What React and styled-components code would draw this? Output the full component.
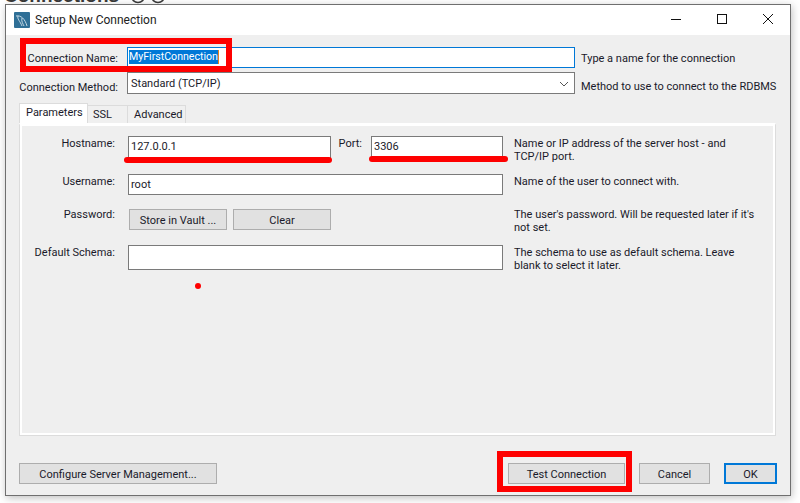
import React from 'react';
import styled, { createGlobalStyle } from 'styled-components';

const GlobalStyle = createGlobalStyle`
  html, body {
    margin: 0;
    padding: 0;
    background: #fff;
  }
`;

const Page = styled.div`
  width: 800px;
  height: 503px;
  position: relative;
  overflow: hidden;
  background: #fff;
  font-family: Roboto, "Noto Sans", sans-serif;
  font-size: 11px;
  color: #1a1a2a;
`;

const Behind = styled.div`
  height: 4px;
  padding-left: 4px;
  display: flex;
  align-items: flex-end;
  overflow: hidden;
`;

const BehindTitle = styled.div`
  font-family: "Liberation Sans", sans-serif;
  font-size: 19px;
  font-weight: 700;
  line-height: 17px;
  color: #3a3a3a;
  flex: none;
  width: 126px;
`;

const BehindIcon = styled.svg`
  width: 16px;
  height: 16px;
  margin-right: 4px;
  flex: none;
`;

const Window = styled.div`
  box-sizing: border-box;
  width: 786px;
  height: 492px;
  margin-left: 5px;
  border: 1px solid #6f6f6f;
  background: #efefef;
  box-shadow: 1px 2px 8px rgba(0, 0, 0, 0.25);
  display: flex;
  flex-direction: column;
  position: relative;
`;

const TitleBar = styled.div`
  height: 30px;
  flex: none;
  background: #fff;
  display: flex;
  align-items: center;
  padding-left: 8px;
  font-size: 12px;
  color: #222;
`;

const AppIcon = styled.svg`
  width: 16px;
  height: 16px;
  margin-right: 5px;
  flex: none;
`;

const TitleText = styled.div`
  flex: 1;
`;

const Caption = styled.svg`
  width: 46px;
  height: 30px;
  flex: none;
`;

const Body = styled.div`
  flex: 1;
  display: flex;
  flex-direction: column;
  padding: 12px 13px 11px 13px;
`;

const TopRow = styled.div`
  display: flex;
  align-items: center;
  height: ${p => p.$h}px;
  margin-bottom: ${p => p.$mb}px;
`;

const TopLabel = styled.div`
  width: 108px;
  text-align: right;
  padding: ${p => p.$drop}px 9px 0 0;
  box-sizing: border-box;
  flex: none;
  white-space: nowrap;
`;

const NameInput = styled.div`
  box-sizing: border-box;
  width: 448px;
  height: 100%;
  border: 1px solid #0078d7;
  background: #fff;
  display: flex;
  align-items: center;
  padding: 0 0 2px 1px;
`;

const Selected = styled.span`
  background: #0078d7;
  color: #fff;
  font-size: 10.6px;
  line-height: 14px;
  border-right: 1px solid #e8801a;
`;

const Select = styled.div`
  box-sizing: border-box;
  width: 448px;
  height: 100%;
  border: 1px solid #7a7a7a;
  background: #fff;
  display: flex;
  align-items: center;
  justify-content: space-between;
  padding: 0 5px 0 3px;
`;

const Chevron = styled.svg`
  width: 10px;
  height: 6px;
  margin-top: 2px;
`;

const TopHelp = styled.div`
  margin-left: 6px;
  padding-top: ${p => p.$drop}px;
  white-space: nowrap;
`;

const Tabs = styled.div`
  display: flex;
  align-items: flex-end;
  height: 20px;
`;

const Tab = styled.div`
  box-sizing: border-box;
  height: ${p => (p.$active ? 20 : 18)}px;
  width: ${p => p.$w}px;
  border: 1px solid #dcdcdc;
  border-bottom: none;
  margin-left: ${p => (p.$active ? 0 : -1)}px;
  background: ${p => (p.$active ? '#fff' : '#f0f0f0')};
  display: flex;
  align-items: center;
  padding: 0 0 ${p => (p.$active ? 2 : 0)}px ${p => p.$pl}px;
`;

const Panel = styled.div`
  box-sizing: border-box;
  flex: 1;
  width: 757px;
  border: 1px solid #dcdcdc;
  border-top: 2px solid #fff;
  outline: 2px solid #fff;
  outline-offset: -3px;
  padding-top: 11px;
  display: grid;
  grid-template-columns: 108px 203px 40px 132px 1fr;
  grid-template-rows: 24px 21px 22px 25px;
  row-gap: 14px;
  align-content: start;
`;

const FieldLabel = styled.div`
  text-align: right;
  line-height: ${p => (p.$high ? 12 : 16)}px;
  padding-right: 13px;
`;

const PortLabel = styled.div`
  text-align: right;
  padding-right: 9px;
  line-height: 16px;
`;

const Field = styled.div`
  box-sizing: border-box;
  grid-column: ${p => p.$span || 'auto'};
  border: 1px solid #7a7a7a;
  background: #fff;
  padding: 0 2px;
  line-height: 20px;
`;

const Help = styled.div`
  grid-column: 5;
  padding-left: 11px;
  width: 246px;
  line-height: 13px;
  margin-top: ${p => (p.$high ? -1 : 1)}px;
`;

const PasswordButtons = styled.div`
  grid-column: 2 / 5;
  display: flex;
  gap: 6px;
  padding-left: 1px;
`;

const Button = styled.div`
  box-sizing: border-box;
  width: ${p => p.$w}px;
  height: 21px;
  flex: none;
  margin-left: ${p => p.$ml || 0}px;
  padding-top: 1px;
  background: #e1e1e1;
  border: ${p => (p.$primary ? '2px solid #0078d7' : '1px solid #adadad')};
  display: flex;
  align-items: center;
  justify-content: center;
`;

const Footer = styled.div`
  display: flex;
  align-items: center;
  margin-top: 27px;
`;

const FooterGap = styled.div`
  flex: 1;
`;

const Box = styled.div`
  position: absolute;
  left: ${p => p.$x}px;
  top: ${p => p.$y}px;
  width: ${p => p.$w}px;
  height: ${p => p.$h}px;
  box-sizing: border-box;
  border: 6px solid #fe0000;
`;

const Stroke = styled.div`
  position: absolute;
  left: ${p => p.$x}px;
  top: ${p => p.$y}px;
  width: ${p => p.$w}px;
  height: 6px;
  border-radius: 3px;
  background: #fe0000;
`;

const Dot = styled.div`
  position: absolute;
  left: 195px;
  top: 283px;
  width: 6px;
  height: 6px;
  border-radius: 50%;
  background: #fe0000;
`;

export default function App() {
  return (
    <Page>
      <GlobalStyle />
      <Behind>
        <BehindTitle>Connections</BehindTitle>
        <BehindIcon viewBox="0 0 16 16">
          <circle cx="8" cy="8" r="6.5" fill="none" stroke="#3a3a3a" strokeWidth="1.5" />
          <path d="M8 4v8" stroke="#3a3a3a" strokeWidth="1.5" />
        </BehindIcon>
        <BehindIcon viewBox="0 0 16 16">
          <circle cx="8" cy="8" r="6.5" fill="none" stroke="#3a3a3a" strokeWidth="1.5" />
          <path d="M8 4v8" stroke="#3a3a3a" strokeWidth="1.5" />
        </BehindIcon>
      </Behind>
      <Window>
        <TitleBar>
          <AppIcon viewBox="0 0 16 16">
            <rect width="16" height="16" rx="1" fill="#2f6f96" />
            <path d="M2 4c5-1 9 3 11 10M4 4c-1 3 2 5 4 10M8 6c-1 3 1 6 2 8" stroke="#c4d8e4" strokeWidth="1" fill="none" />
          </AppIcon>
          <TitleText>Setup New Connection</TitleText>
          <Caption viewBox="0 0 46 30">
            <path d="M19 14.5h10" stroke="#111" strokeWidth="1" />
          </Caption>
          <Caption viewBox="0 0 46 30">
            <rect x="19.5" y="9.5" width="9" height="9" fill="none" stroke="#111" />
          </Caption>
          <Caption viewBox="0 0 46 30">
            <path d="M19 9l10 10M29 9l-10 10" stroke="#111" strokeWidth="1" />
          </Caption>
        </TitleBar>
        <Body>
          <TopRow $h={21} $mb={4}>
            <TopLabel $drop={2}>Connection Name:</TopLabel>
            <NameInput><Selected>MyFirstConnection</Selected></NameInput>
            <TopHelp $drop={2}>Type a name for the connection</TopHelp>
          </TopRow>
          <TopRow $h={22} $mb={9}>
            <TopLabel $drop={8}>Connection Method:</TopLabel>
            <Select>
              Standard (TCP/IP)
              <Chevron viewBox="0 0 10 6">
                <path d="M1 1l4 4 4-4" stroke="#555" fill="none" />
              </Chevron>
            </Select>
            <TopHelp $drop={7}>Method to use to connect to the RDBMS</TopHelp>
          </TopRow>
          <Tabs>
            <Tab $active $w={69} $pl={6}>Parameters</Tab>
            <Tab $w={41} $pl={5}>SSL</Tab>
            <Tab $w={59} $pl={6}>Advanced</Tab>
          </Tabs>
          <Panel>
            <FieldLabel>Hostname:</FieldLabel>
            <Field>127.0.0.1</Field>
            <PortLabel>Port:</PortLabel>
            <Field>3306</Field>
            <Help>Name or IP address of the server host - and TCP/IP port.</Help>

            <FieldLabel>Username:</FieldLabel>
            <Field $span="2 / 5">root</Field>
            <Help>Name of the user to connect with.</Help>

            <FieldLabel $high>Password:</FieldLabel>
            <PasswordButtons>
              <Button $w={98}>Store in Vault ...</Button>
              <Button $w={98}>Clear</Button>
            </PasswordButtons>
            <Help $high>The user's password. Will be requested later if it's not set.</Help>

            <FieldLabel>Default Schema:</FieldLabel>
            <Field $span="2 / 5" />
            <Help>The schema to use as default schema. Leave blank to select it later.</Help>
          </Panel>
          <Footer>
            <Button $w={198}>Configure Server Management...</Button>
            <FooterGap />
            <Button $w={117}>Test Connection</Button>
            <Button $w={71} $ml={14}>Cancel</Button>
            <Button $w={53} $ml={14} $primary>OK</Button>
          </Footer>
        </Body>
      </Window>
      <Box $x={20} $y={38} $w={212} $h={34} />
      <Box $x={497} $y={451} $w={135} $h={41} />
      <Stroke $x={124} $y={157} $w={208} />
      <Stroke $x={369} $y={156} $w={139} />
      <Dot />
    </Page>
  );
}
